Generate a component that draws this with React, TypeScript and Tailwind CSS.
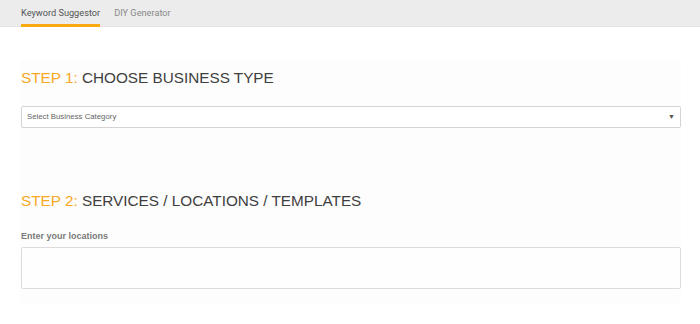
const App = () => (
  <div className="min-h-[324px] bg-white" style={{ fontFamily: '"Liberation Sans", Arial, sans-serif' }}>
    <nav className="h-[27px] bg-[#ececec] border-b border-[#e2e2e2] flex items-end px-[21px] gap-[14px] font-['Roboto',sans-serif]">
      <div className="h-full flex flex-col justify-end">
        <span className="text-[9.2px] text-[#555] leading-none pb-[7px]">Keyword Suggestor</span>
        <div className="h-[3px] bg-[#fcaa12] -mb-[1px]" />
      </div>
      <div className="h-full flex flex-col justify-end">
        <span className="text-[9.2px] text-[#8a8a8a] leading-none pb-[9px]">DIY Generator</span>
      </div>
    </nav>

    <div className="mt-[33px] ml-[20px] mr-[19px] bg-[#fdfdfd] pb-[14px]">
      <section className="pl-[1px]">
        <h2 className="pt-[10px] text-[15.3px] leading-none text-[#3f3f3f]">
          <span className="text-[#f9a825]">STEP 1:</span> CHOOSE BUSINESS TYPE
        </h2>
        <div className="mt-[21px] h-[22px] border border-[#d4d4d4] rounded-[2px] bg-white flex items-center justify-between px-[5px]">
          <span className="text-[7.8px] text-[#666]">Select Business Category</span>
          <span className="text-[7px] text-[#555]">▼</span>
        </div>
      </section>

      <section className="pl-[1px] mt-[65px]">
        <h2 className="text-[15.3px] leading-none text-[#3f3f3f]">
          <span className="text-[#f9a825]">STEP 2:</span> SERVICES / LOCATIONS / TEMPLATES
        </h2>
        <label className="block mt-[21px] text-[9px] font-bold text-[#7a7a7a]">Enter your locations</label>
        <div className="mt-[4px] h-[42px] border border-[#dcdcdc] rounded-[2px] bg-[#fefefe]" />
      </section>
    </div>
  </div>
);

export default App;
